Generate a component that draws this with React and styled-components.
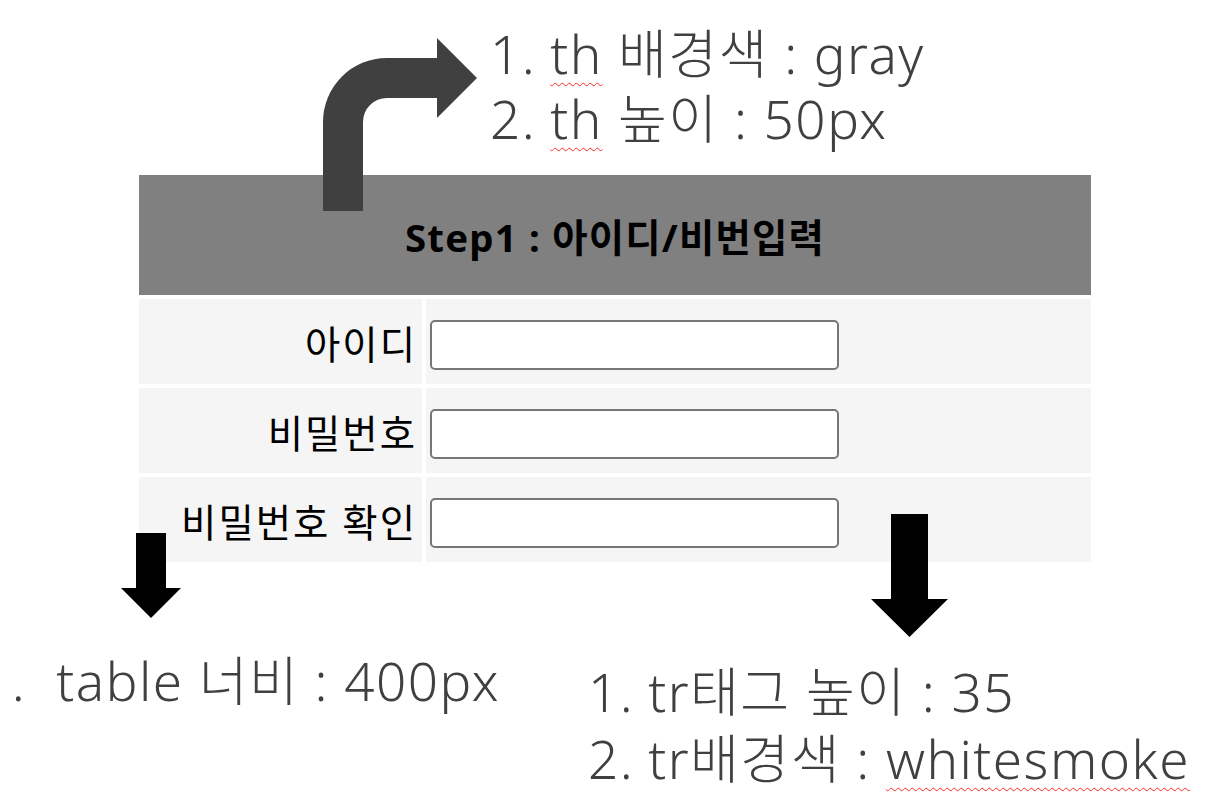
import React from 'react';
import styled, { createGlobalStyle } from 'styled-components';

const GlobalStyle = createGlobalStyle`
    html, body {
        margin: 0;
        padding: 0;
        background: #ffffff;
    }
    body {
        font-family: "Noto Sans", "Noto Sans CJK KR", sans-serif;
        overflow: hidden;
    }
`;

const Page = styled.div`
    position: relative;
    width: 1218px;
    height: 810px;
    overflow: hidden;
    background: #ffffff;
`;

const Note = styled.div`
    font-family: "Noto Sans", "Noto Sans CJK KR", sans-serif;
    font-weight: 300;
    font-size: 53px;
    letter-spacing: 1.5px;
    line-height: ${props => props.lh || 65}px;
    color: #404040;
    white-space: nowrap;
`;

const Num = styled.span`
    margin-right: ${props => props.gap || 14}px;
`;

const TopNote = styled(Note)`
    padding: 21px 0 0 490px;
`;

const Misspelled = styled.span`
    text-decoration: underline wavy #ff2a2a;
    text-decoration-thickness: 1px;
    text-underline-offset: 8px;
`;

const StepTable = styled.table`
    margin: 20px 0 0 135px;
    width: 960px;
    border-collapse: separate;
    border-spacing: 4.8px;
    table-layout: fixed;
    font-family: "Noto Sans", "Noto Sans CJK KR", sans-serif;
    font-size: 38.4px;
    color: #000;
`;

const LabelCol = styled.col`
    width: 283px;
`;

const HeadCell = styled.th`
    height: 120px;
    padding: 0;
    background: gray;
    font-weight: 700;
    text-align: center;
    vertical-align: middle;
    letter-spacing: 1.2px;
`;

const Row = styled.tr`
    height: 85px;
`;

const LabelCell = styled.td`
    padding: 0 5px 0 0;
    background: whitesmoke;
    text-align: right;
    vertical-align: middle;
    white-space: nowrap;
    letter-spacing: 2px;
`;

const FieldCell = styled.td`
    padding: 6px 0 0 4px;
    background: whitesmoke;
    vertical-align: middle;
`;

const TextInput = styled.input`
    display: block;
    box-sizing: border-box;
    width: 409px;
    height: 50px;
    margin: 0;
    border: 2px solid #767676;
    border-radius: 5px;
    background: #ffffff;
    outline: none;
`;

const Bottom = styled.div`
    display: flex;
    align-items: flex-start;
    margin-top: 82px;
`;

const LeftNote = styled(Note)`
    width: 608px;
    margin-left: -20px;
`;

const RightNote = styled(Note)`
    margin-top: 10px;
`;

const Arrow = styled.svg`
    position: absolute;
    left: ${props => props.x}px;
    top: ${props => props.y}px;
    display: block;
`;

function App() {
    return (
        <Page>
            <GlobalStyle />
            <TopNote>
                <div><Num>1.</Num><Misspelled>th</Misspelled> 배경색 : gray</div>
                <div><Num>2.</Num><Misspelled>th</Misspelled> 높이 : 50px</div>
            </TopNote>

            <StepTable>
                <colgroup>
                    <LabelCol />
                    <col />
                </colgroup>
                <thead>
                    <tr>
                        <HeadCell colSpan={2}>Step1 : 아이디/비번입력</HeadCell>
                    </tr>
                </thead>
                <tbody>
                    <Row>
                        <LabelCell>아이디</LabelCell>
                        <FieldCell><TextInput type="text" /></FieldCell>
                    </Row>
                    <Row>
                        <LabelCell>비밀번호</LabelCell>
                        <FieldCell><TextInput type="password" /></FieldCell>
                    </Row>
                    <Row>
                        <LabelCell>비밀번호 확인</LabelCell>
                        <FieldCell><TextInput type="password" /></FieldCell>
                    </Row>
                </tbody>
            </StepTable>

            <Bottom>
                <LeftNote><Num gap={30}>1.</Num>table 너비 : 400px</LeftNote>
                <RightNote lh={67}>
                    <div><Num>1.</Num>tr태그 높이 : 35</div>
                    <div><Num>2.</Num>tr배경색 : <Misspelled>whitesmoke</Misspelled></div>
                </RightNote>
            </Bottom>

            {/* annotation arrows drawn over the table */}
            <Arrow x={323} y={38} width="154" height="173" viewBox="0 0 154 173">
                <path d="M0 173 L0 84 A64 64 0 0 1 64 20 L114 20 L114 0 L154 40 L114 80 L114 60 L64 60 A24 24 0 0 0 40 84 L40 173 Z" fill="#404040" />
            </Arrow>
            <Arrow x={121} y={533} width="60" height="85" viewBox="0 0 60 85">
                <path d="M15 0 H45 V55 H60 L30 85 L0 55 H15 Z" fill="#000" />
            </Arrow>
            <Arrow x={871} y={514} width="77" height="123" viewBox="0 0 77 123">
                <path d="M20 0 H57 V85 H77 L38.5 123 L0 85 H20 Z" fill="#000" />
            </Arrow>
        </Page>
    );
}

export default App;
